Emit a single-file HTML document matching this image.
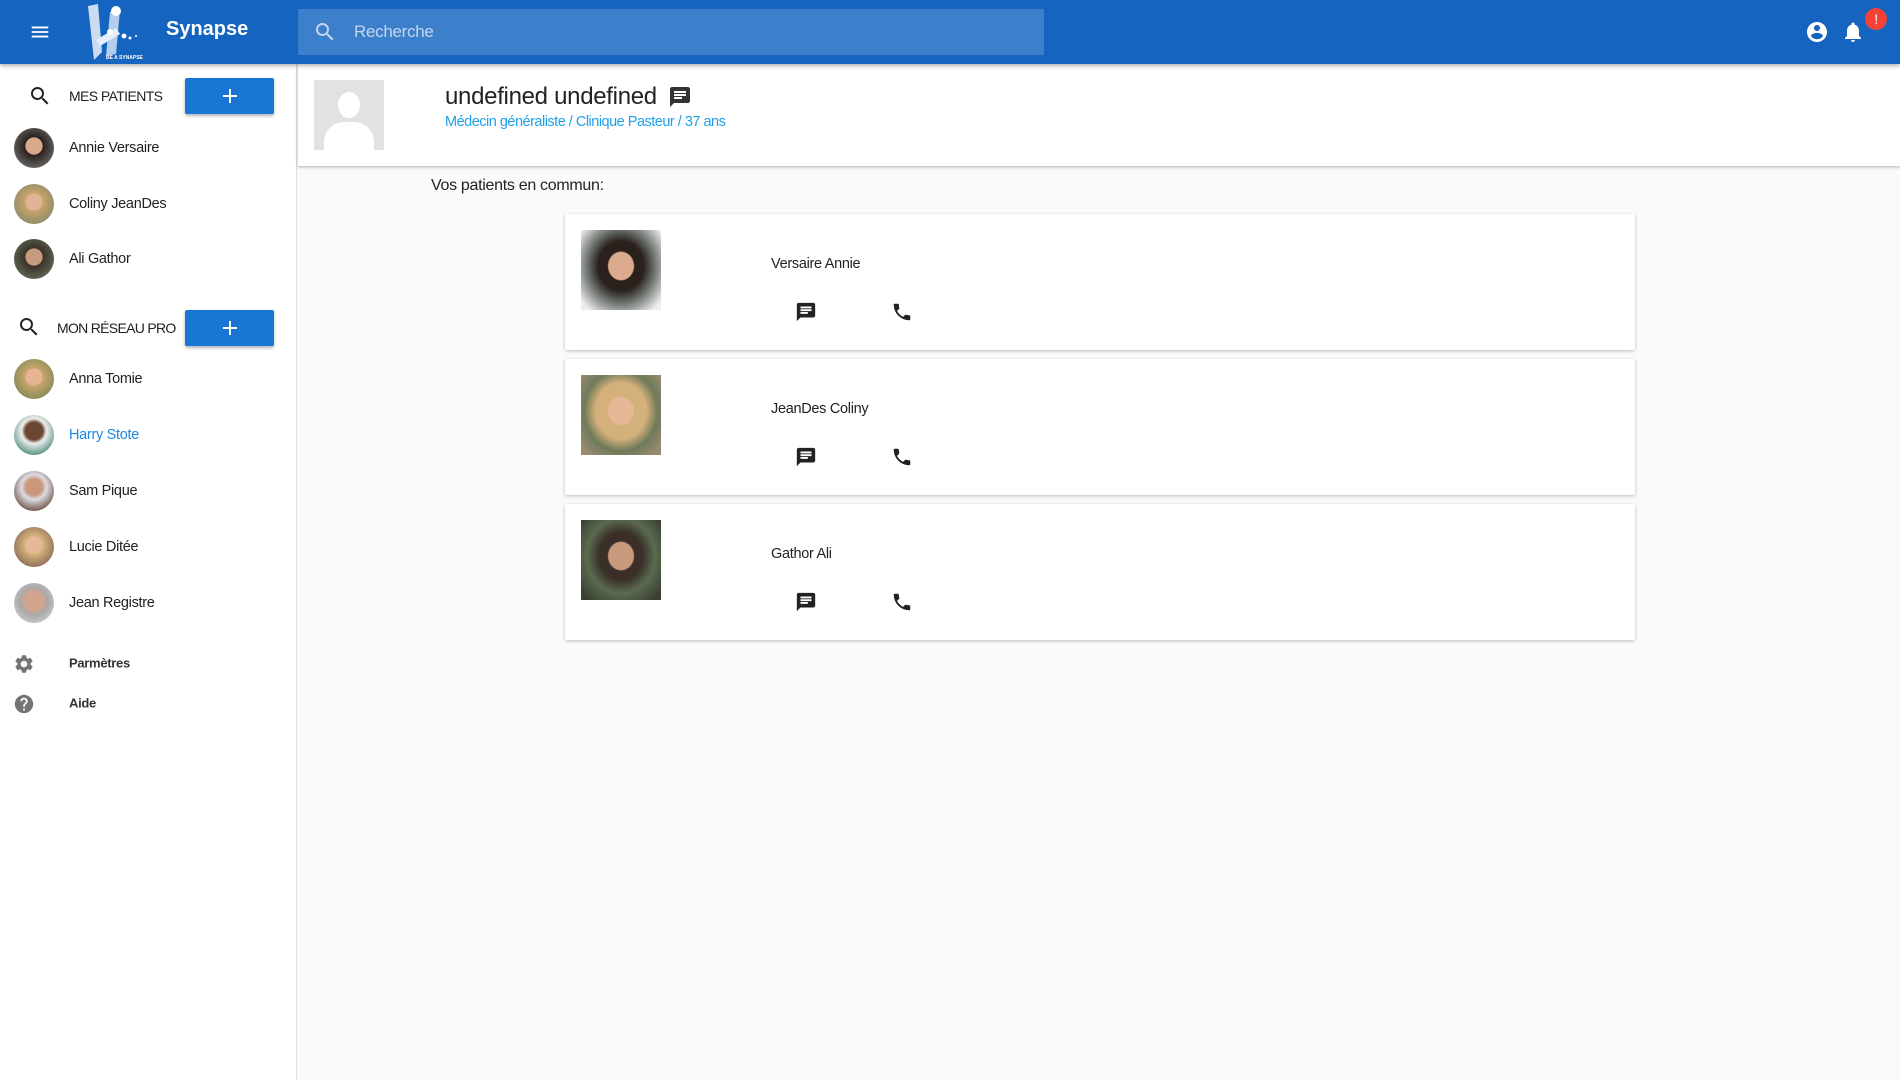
<!DOCTYPE html>
<html><head><meta charset="utf-8"><style>
*{box-sizing:border-box;margin:0;padding:0}
body{width:1900px;height:1080px;background:#fafafa;font-family:"Liberation Sans",sans-serif;position:relative;overflow:hidden;color:#212121;letter-spacing:-0.3px}
.abs{position:absolute}
#hdr{left:0;top:0;width:1900px;height:64px;background:#1565c0;box-shadow:0 2px 4px rgba(0,0,0,.3);z-index:3}
#side{left:0;top:64px;width:297px;height:1016px;background:#fff;border-right:1px solid #e0e0e0}
.av{position:absolute;width:40px;height:40px;border-radius:50%;left:14px}
.nm{position:absolute;left:69px;font-size:14.5px;color:#222;transform:translateY(-50%)}
.btn{position:absolute;left:185px;width:89px;height:36px;background:#1976d2;border-radius:2px;box-shadow:0 2px 3px rgba(0,0,0,.3)}
.btn:before{content:"";position:absolute;left:38px;top:17px;width:14px;height:2px;background:#fff}
.btn:after{content:"";position:absolute;left:44px;top:11px;width:2px;height:14px;background:#fff}
.card{position:absolute;left:565px;width:1070px;height:136px;background:#fff;box-shadow:0 1px 3px rgba(0,0,0,.25);border-radius:2px}
.card .ph{position:absolute;left:16px;top:16px;width:80px;height:80px}
.card .cn{position:absolute;left:206px;top:42px;font-size:14.5px;color:#222}
.card svg{position:absolute}
</style></head><body>
<div id="hdr" class="abs">
 <svg class="abs" style="left:29px;top:21px" width="22" height="22" viewBox="0 0 24 24"><path fill="#fff" d="M3 18h18v-2H3v2zm0-5h18v-2H3v2zm0-7v2h18V6H3z"/></svg>
 <svg class="abs" style="left:84px;top:2px" width="70" height="60" viewBox="0 0 70 60">
  <path d="M4 4 L14 2 L18 50 L10 58 Z" fill="#dfe9f7" opacity=".9"/>
  <path d="M26 10 L36 8 L32 52 L22 54 Z" fill="#cfe0f5" opacity=".85"/>
  <path d="M12 38 L32 26 L36 32 L16 44 Z" fill="#e5eefa"/>
  <circle cx="32" cy="9" r="5" fill="#fff"/><circle cx="26" cy="30" r="3" fill="#fff"/><circle cx="40" cy="34" r="2.5" fill="#fff"/><circle cx="46" cy="36" r="1.5" fill="#fff"/><circle cx="52" cy="34" r="1" fill="#fff"/>
  <text x="22" y="57" font-size="5" fill="#fff" font-family="Liberation Sans" font-weight="bold" letter-spacing="0">BE A SYNAPSE</text>
 </svg>
 <div class="abs" style="left:166px;top:18px;color:#fff;font-size:20px;font-weight:bold;letter-spacing:0">Synapse</div>
 <div class="abs" style="left:298px;top:9px;width:746px;height:46px;background:rgba(255,255,255,.17);border-radius:2px">
  <svg class="abs" style="left:15px;top:11px" width="24" height="24" viewBox="0 0 24 24"><path fill="#c5d6ee" d="M15.5 14h-.79l-.28-.27A6.47 6.47 0 0016 9.5 6.5 6.5 0 109.5 16c1.61 0 3.09-.59 4.23-1.57l.27.28v.79l5 4.99L20.49 19l-4.99-5zm-6 0C7.01 14 5 11.99 5 9.5S7.01 5 9.5 5 14 7.01 14 9.5 11.99 14 9.5 14z"/></svg>
  <div class="abs" style="left:56px;top:13px;font-size:17px;color:#c5d6ee">Recherche</div>
 </div>
 <svg class="abs" style="left:1805px;top:20px" width="24" height="24" viewBox="0 0 24 24"><path fill="#fff" d="M12 2C6.48 2 2 6.48 2 12s4.48 10 10 10 10-4.48 10-10S17.52 2 12 2zm0 3c1.66 0 3 1.34 3 3s-1.34 3-3 3-3-1.34-3-3 1.34-3 3-3zm0 14.2a7.2 7.2 0 01-6-3.22c.03-1.99 4-3.080 6-3.08 1.99 0 5.97 1.09 6 3.08a7.2 7.2 0 01-6 3.22z"/></svg>
 <svg class="abs" style="left:1841px;top:20px" width="24" height="24" viewBox="0 0 24 24"><path fill="#fff" d="M12 22c1.1 0 2-.9 2-2h-4c0 1.1.89 2 2 2zm6-6v-5c0-3.07-1.64-5.64-4.5-6.32V4c0-.83-.67-1.5-1.5-1.5s-1.5.67-1.5 1.5v.68C7.63 5.36 6 7.920 6 11v5l-2 2v1h16v-1l-2-2z"/></svg>
 <div class="abs" style="left:1865px;top:8px;width:22px;height:22px;border-radius:50%;background:#f44336;color:#fff;font-size:14px;text-align:center;line-height:22px">!</div>
</div>

<div id="side" class="abs">
 <svg class="abs" style="left:28px;top:20px" width="24" height="24" viewBox="0 0 24 24"><path fill="#222" d="M15.5 14h-.79l-.28-.27A6.47 6.47 0 0016 9.5 6.5 6.5 0 109.5 16c1.61 0 3.09-.59 4.23-1.57l.27.28v.79l5 4.99L20.49 19l-4.99-5zm-6 0C7.01 14 5 11.99 5 9.5S7.01 5 9.5 5 14 7.01 14 9.5 11.99 14 9.5 14z"/></svg>
 <div class="abs" style="left:69px;top:24px;font-size:14px;color:#222;letter-spacing:-0.6px">MES PATIENTS</div>
 <div class="btn" style="top:14px"></div>
 <div class="av" style="top:64px;background:radial-gradient(circle at 50% 45%,#d9a98c 0 28%,#2a211d 30%,#6b6b68 80%)"></div><div class="nm" style="top:84px">Annie Versaire</div>
 <div class="av" style="top:120px;background:radial-gradient(circle at 50% 45%,#e0b396 0 28%,#c9a36a 30%,#8a8a6a 80%)"></div><div class="nm" style="top:140px">Coliny JeanDes</div>
 <div class="av" style="top:175px;background:radial-gradient(circle at 50% 45%,#c79a7d 0 28%,#3b3128 30%,#5f6b55 80%)"></div><div class="nm" style="top:195px">Ali Gathor</div>

 <svg class="abs" style="left:17px;top:251px" width="24" height="24" viewBox="0 0 24 24"><path fill="#222" d="M15.5 14h-.79l-.28-.27A6.47 6.47 0 0016 9.5 6.5 6.5 0 109.5 16c1.61 0 3.09-.59 4.23-1.57l.27.28v.79l5 4.99L20.49 19l-4.99-5zm-6 0C7.01 14 5 11.99 5 9.5S7.01 5 9.5 5 14 7.01 14 9.5 11.99 14 9.5 14z"/></svg>
 <div class="abs" style="left:57px;top:256px;font-size:14px;color:#222;letter-spacing:-0.7px">MON RÉSEAU PRO</div>
 <div class="btn" style="top:246px"></div>
 <div class="av" style="top:295px;background:radial-gradient(circle at 50% 45%,#e4b495 0 28%,#c9a46a 30%,#7f8a5a 80%)"></div><div class="nm" style="top:315px">Anna Tomie</div>
 <div class="av" style="top:351px;background:radial-gradient(circle at 50% 40%,#6b4632 0 28%,#eeeeee 40%,#4f8a7a 80%)"></div><div class="nm" style="top:371px;color:#1e88e5">Harry Stote</div>
 <div class="av" style="top:407px;background:radial-gradient(circle at 50% 40%,#c9987a 0 26%,#dcdce4 40%,#6a4e40 80%)"></div><div class="nm" style="top:427px">Sam Pique</div>
 <div class="av" style="top:463px;background:radial-gradient(circle at 50% 45%,#e6b89a 0 28%,#d7b47a 30%,#8a6a5a 80%)"></div><div class="nm" style="top:483px">Lucie Ditée</div>
 <div class="av" style="top:519px;background:radial-gradient(circle at 50% 45%,#d3a48e 0 32%,#a8a8a8 45%,#c8c8c8 80%)"></div><div class="nm" style="top:539px">Jean Registre</div>

 <svg class="abs" style="left:13px;top:589px" width="22" height="22" viewBox="0 0 24 24"><path fill="#757575" d="M19.14 12.94c.04-.3.06-.61.06-.94 0-.32-.02-.64-.07-.94l2.03-1.58a.49.49 0 00.12-.61l-1.92-3.32a.49.49 0 00-.59-.22l-2.39.96c-.5-.38-1.03-.7-1.62-.94l-.36-2.54a.48.48 0 00-.48-.41h-3.84c-.24 0-.43.17-.47.41l-.36 2.540c-.59.24-1.13.57-1.62.94l-2.39-.96a.49.49 0 00-.59.22L2.74 8.87c-.12.21-.08.47.12.61l2.03 1.58c-.05.3-.09.63-.09.94s.02.64.07.94l-2.03 1.58a.49.49 0 00-.12.61l1.92 3.32c.12.22.37.29.59.22l2.39-.96c.5.38 1.03.7 1.62.94l.36 2.54c.05.24.24.41.48.41h3.84c.24 0 .44-.17.47-.41l.36-2.54c.59-.24 1.13-.56 1.62-.94l2.39.96c.22.08.47 0 .59-.22l1.92-3.32c.12-.22.07-.47-.12-.61l-2.01-1.58zM12 15.6c-1.98 0-3.6-1.62-3.6-3.6s1.62-3.6 3.6-3.6 3.6 1.62 3.6 3.6-1.62 3.6-3.6 3.6z"/></svg>
 <div class="nm" style="top:599px;font-size:13px;font-weight:bold;color:#333">Parmètres</div>
 <svg class="abs" style="left:13px;top:629px" width="22" height="22" viewBox="0 0 24 24"><path fill="#757575" d="M12 2C6.48 2 2 6.48 2 12s4.48 10 10 10 10-4.48 10-10S17.52 2 12 2zm1 17h-2v-2h2v2zm2.07-7.75l-.9.92C13.45 12.9 13 13.5 13 15h-2v-.5c0-1.1.45-2.1 1.17-2.83l1.24-1.26c.37-.36.59-.86.59-1.41 0-1.1-.9-2-2-2s-2 .9-2 2H8c0-2.21 1.79-4 4-4s4 1.79 4 4c0 .88-.36 1.68-.93 2.25z"/></svg>
 <div class="nm" style="top:639px;font-size:13px;font-weight:bold;color:#333">Aide</div>
</div>

<div class="abs" style="left:298px;top:64px;width:1602px;height:102px;background:#fff;box-shadow:0 1px 3px rgba(0,0,0,.3)">
 <div class="abs" style="left:16px;top:16px;width:70px;height:70px;background:#e2e2e2;overflow:hidden">
  <div class="abs" style="left:24px;top:12px;width:22px;height:26px;border-radius:50%;background:#fff"></div>
  <div class="abs" style="left:10px;top:42px;width:50px;height:40px;border-radius:20px 20px 0 0;background:#fff"></div>
 </div>
 <div class="abs" style="left:147px;top:19px;font-size:24px;color:#222">undefined undefined</div>
 <svg class="abs" style="left:370px;top:21px" width="24" height="24" viewBox="0 0 24 24"><path fill="#333" d="M20 2H4c-1.1 0-1.99.9-1.99 2L2 22l4-4h14c1.1 0 2-.9 2-2V4c0-1.1-.9-2-2-2zM6 9h12v2H6V9zm8 5H6v-2h8v2zm4-6H6V6h12v2z"/></svg>
 <div class="abs" style="left:147px;top:50px;font-size:14.5px;color:#1ea0e8;letter-spacing:-0.5px">Médecin généraliste / Clinique Pasteur / 37 ans</div>
</div>

<div class="abs" style="left:431px;top:177px;font-size:16px;color:#222">Vos patients en commun:</div>

<div class="card" style="top:214px"><div class="ph" style="background:radial-gradient(ellipse at 50% 45%,#dcab8e 0 22%,#2a211d 24% 40%,#6f7570 60%,#eee 90%)"></div><div class="cn">Versaire Annie</div>
 <svg style="left:230px;top:87px" width="22" height="22" viewBox="0 0 24 24"><path fill="#222" d="M20 2H4c-1.1 0-1.99.9-1.99 2L2 22l4-4h14c1.1 0 2-.9 2-2V4c0-1.1-.9-2-2-2zM6 9h12v2H6V9zm8 5H6v-2h8v2zm4-6H6V6h12v2z"/></svg>
 <svg style="left:326px;top:87px" width="22" height="22" viewBox="0 0 24 24"><path fill="#222" d="M6.62 10.79c1.44 2.83 3.76 5.14 6.59 6.59l2.2-2.2c.27-.27.67-.36 1.02-.24 1.12.37 2.33.57 3.57.57.55 0 1 .45 1 1V20c0 .55-.45 1-1 1-9.39 0-17-7.61-17-17 0-.55.45-1 1-1h3.5c.55 0 1 .45 1 1 0 1.25.2 2.45.57 3.57.11.35.03.74-.25 1.02l-2.2 2.2z"/></svg></div>
<div class="card" style="top:359px"><div class="ph" style="background:radial-gradient(ellipse at 50% 45%,#e6b898 0 22%,#d4b07a 24% 45%,#6f7a5a 65%,#9a8a70 90%)"></div><div class="cn">JeanDes Coliny</div>
 <svg style="left:230px;top:87px" width="22" height="22" viewBox="0 0 24 24"><path fill="#222" d="M20 2H4c-1.1 0-1.99.9-1.99 2L2 22l4-4h14c1.1 0 2-.9 2-2V4c0-1.1-.9-2-2-2zM6 9h12v2H6V9zm8 5H6v-2h8v2zm4-6H6V6h12v2z"/></svg>
 <svg style="left:326px;top:87px" width="22" height="22" viewBox="0 0 24 24"><path fill="#222" d="M6.62 10.79c1.44 2.83 3.76 5.14 6.59 6.59l2.2-2.2c.27-.27.67-.36 1.02-.24 1.12.37 2.33.57 3.57.57.55 0 1 .45 1 1V20c0 .55-.45 1-1 1-9.39 0-17-7.61-17-17 0-.55.45-1 1-1h3.5c.55 0 1 .45 1 1 0 1.25.2 2.45.57 3.57.11.35.03.74-.25 1.02l-2.2 2.2z"/></svg></div>
<div class="card" style="top:504px"><div class="ph" style="background:radial-gradient(ellipse at 50% 45%,#c99a7c 0 22%,#3a3028 24% 38%,#5a6a50 60%,#3a4030 90%)"></div><div class="cn">Gathor Ali</div>
 <svg style="left:230px;top:87px" width="22" height="22" viewBox="0 0 24 24"><path fill="#222" d="M20 2H4c-1.1 0-1.99.9-1.99 2L2 22l4-4h14c1.1 0 2-.9 2-2V4c0-1.1-.9-2-2-2zM6 9h12v2H6V9zm8 5H6v-2h8v2zm4-6H6V6h12v2z"/></svg>
 <svg style="left:326px;top:87px" width="22" height="22" viewBox="0 0 24 24"><path fill="#222" d="M6.62 10.79c1.44 2.83 3.76 5.14 6.59 6.59l2.2-2.2c.27-.27.67-.36 1.02-.24 1.12.37 2.33.57 3.57.57.55 0 1 .45 1 1V20c0 .55-.45 1-1 1-9.39 0-17-7.61-17-17 0-.55.45-1 1-1h3.5c.55 0 1 .45 1 1 0 1.25.2 2.45.57 3.57.11.35.03.74-.25 1.02l-2.2 2.2z"/></svg></div>
</body></html>
